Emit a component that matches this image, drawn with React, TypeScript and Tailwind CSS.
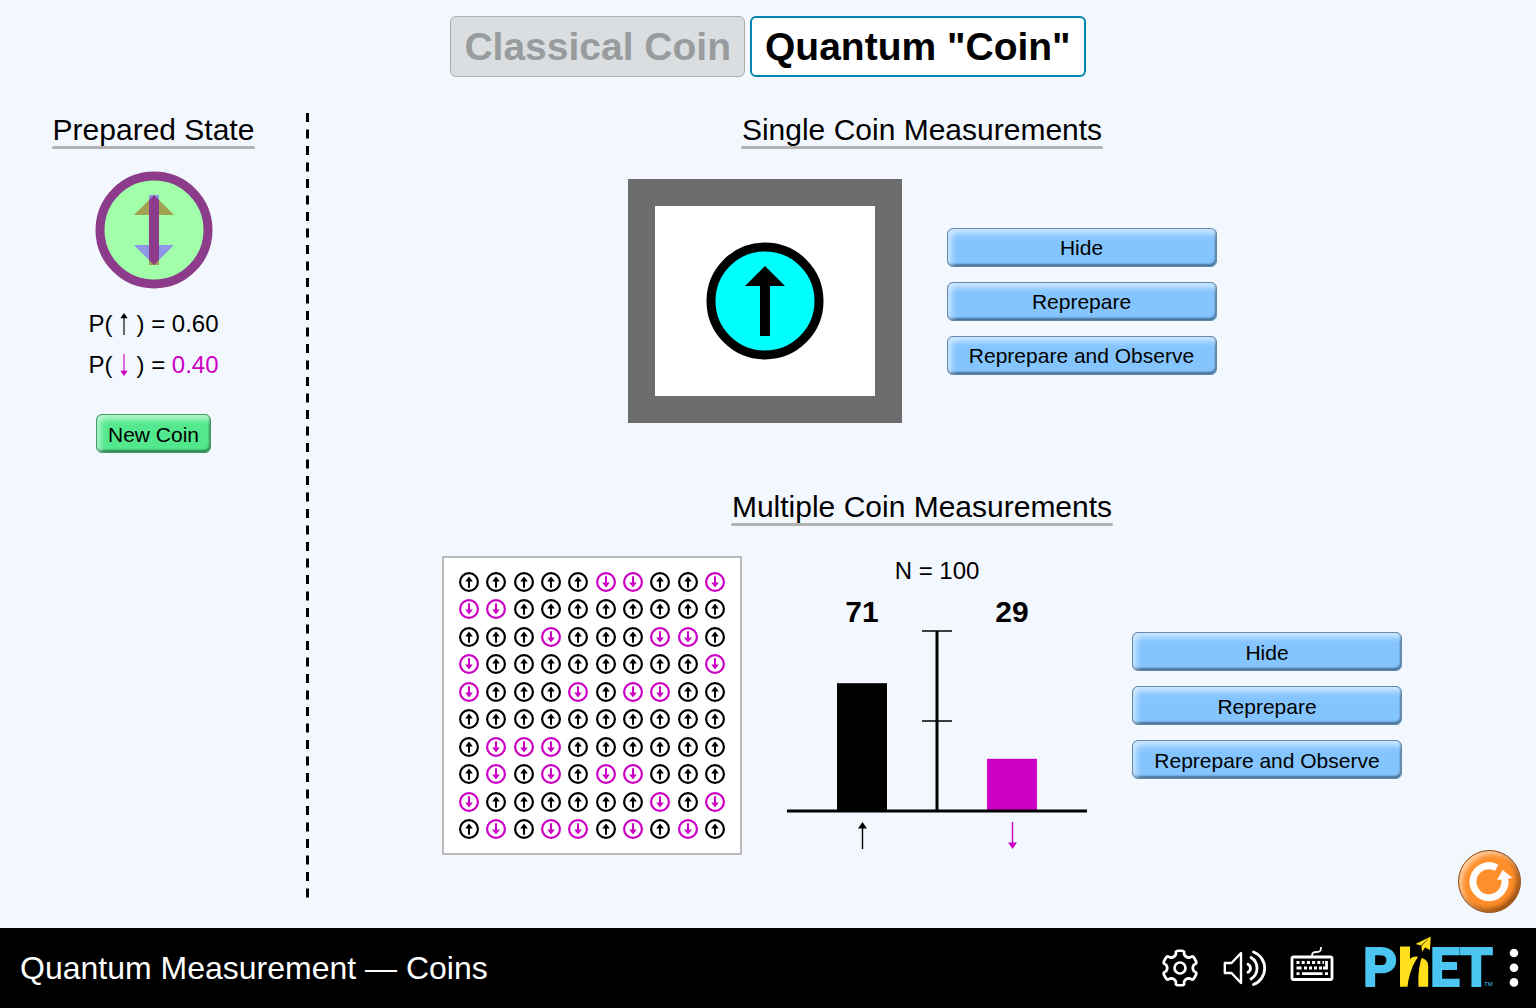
import React from "react";

const MAGENTA = "#cc00c4";

const COINS = [
  "uuuuudduud",
  "dduuuuuuuu",
  "uuuduuuddu",
  "duuuuuuuud",
  "duuududduu",
  "uuuuuuuuuu",
  "uddduuuuuu",
  "udududduuu",
  "duuuuuudud",
  "ududdududu",
];

const HEADS = COINS.join("").split("u").length - 1;
const TAILS = 100 - HEADS;

function polar(radius: number, degrees: number) {
  const a = (degrees * Math.PI) / 180;
  return `${(19 + radius * Math.cos(a)).toFixed(2)} ${(19 + radius * Math.sin(a)).toFixed(2)}`;
}

// Six-toothed gear outline centred in a 38 x 38 box.
const GEAR =
  [-90, -30, 30, 90, 150, 210]
    .map(
      (a, i) =>
        `${i === 0 ? "M" : "L"}${polar(14.2, a - 17)}L${polar(16.8, a - 14)}Q${polar(17.6, a - 11)} ${polar(17.4, a - 7)}` +
        `L${polar(17.4, a + 7)}Q${polar(17.6, a + 11)} ${polar(16.8, a + 14)}L${polar(14.2, a + 17)}Q${polar(11.6, a + 30)} ${polar(14.2, a + 43)}`
    )
    .join("") + "Z";

function Heading({ children }: { children: React.ReactNode }) {
  return (
    <h2 className="w-fit text-[30px] leading-[34px] whitespace-nowrap">
      {children}
      <span className="-mx-px -mt-px mb-px block h-[3px] rounded-full bg-[#b3b3b3]" />
    </h2>
  );
}

function PushButton({ label, tone = "blue" }: { label: string; tone?: "blue" | "green" }) {
  const look =
    tone === "blue"
      ? "w-[270px] border-[#6289ab] bg-[#85c5ff] shadow-[inset_3px_4px_6px_rgba(255,255,255,0.65),inset_-1px_-2px_2px_#3f6a92]"
      : "w-[115px] border-[#3f9a64] bg-[#53e88d] shadow-[inset_3px_4px_6px_rgba(255,255,255,0.65),inset_-1px_-2px_2px_#257d4a]";
  return (
    <button type="button" className={`h-[39px] rounded-[6px] border pt-0.5 text-[21px] leading-6 whitespace-nowrap ${look}`}>
      {label}
    </button>
  );
}

function ButtonColumn() {
  return (
    <div className="flex flex-col gap-[15px]">
      <PushButton label="Hide" />
      <PushButton label="Reprepare" />
      <PushButton label="Reprepare and Observe" />
    </div>
  );
}

function ThinArrow({ down = false, className }: { down?: boolean; className: string }) {
  return (
    <svg viewBox="0 0 9 27" className={className} aria-label={down ? "down" : "up"} role="img">
      <path
        d={down ? "M3.800 0h1.400v20.500H9L4.500 27 0 20.500h3.800z" : "M3.800 27h1.400V6.500H9L4.500 0 0 6.500h3.800z"}
        fill={down ? MAGENTA : "#000"}
      />
    </svg>
  );
}

function SmallCoin({ down }: { down: boolean }) {
  const color = down ? MAGENTA : "#000";
  return (
    <svg viewBox="0 0 20 20" className="size-5" role="img" aria-label={down ? "down" : "up"}>
      <circle cx="10" cy="10" r="8.900" fill="#fff" stroke={color} strokeWidth="2.200" />
      <path
        d={down ? "M9 4.300h2v6.200h2.800L10 15.500 6.200 10.500H9z" : "M9 15.700h2V9.500h2.800L10 4.500 6.200 9.500H9z"}
        fill={color}
      />
    </svg>
  );
}

function Probability({ down = false, value }: { down?: boolean; value: string }) {
  return (
    <p className="flex h-[41px] items-center text-[24px] whitespace-pre">
      <span>P(</span>
      <ThinArrow down={down} className="mx-2 h-[22px] w-[8px]" />
      <span>) = </span>
      <span className={down ? "text-[#cc00c4]" : ""}>{value}</span>
    </p>
  );
}

function Histogram() {
  return (
    <div className="flex w-[300px] flex-col pb-[6px]">
      <p className="text-center text-[24px] leading-[30px]">N = 100</p>
      <div className="mt-[9px] grid grid-cols-2 text-center text-[30px] leading-[34px] font-bold">
        <span>{HEADS}</span>
        <span>{TAILS}</span>
      </div>
      <svg viewBox="0 0 300 184" className="h-[184px] w-[300px]" role="img" aria-label="Histogram of measurements">
        <rect x="50" y={182 - HEADS * 1.8} width="50" height={HEADS * 1.8} fill="#000" />
        <rect x="200" y={182 - TAILS * 1.8} width="50" height={TAILS * 1.8} fill={MAGENTA} />
        <path d="M150 2v180" stroke="#000" strokeWidth="3" />
        <path d="M135 2h30M135 92h30" stroke="#000" strokeWidth="1.700" />
        <path d="M0 182h300" stroke="#000" strokeWidth="3" />
      </svg>
      <div className="mt-[9px] grid grid-cols-2 justify-items-center">
        <ThinArrow className="h-[27px] w-[9px]" />
        <ThinArrow down className="h-[27px] w-[9px]" />
      </div>
    </div>
  );
}

function PhetLogo() {
  return (
    <svg viewBox="-2 0 134 68" className="h-[68px] w-[134px]" role="img" aria-label="PhET">
      <g fontFamily="Roboto, sans-serif" fontWeight="700" fontSize="53" fill="#4bc5f2" stroke="#4bc5f2" strokeWidth="2">
        <text x="-1" y="52">P</text>
        <text x="66" y="52">E</text>
        <text x="96" y="52">T</text>
      </g>
      <text x="120" y="52" fontFamily="'Liberation Sans', sans-serif" fontSize="6" fill="#4bc5f2">TM</text>
      <g fill="#ffdf1c">
        <path d="M36 12.500h10v12.500c3-2.500 5.500-3 8-2C49 30 45 40 43.500 52.700H36z" />
        <path d="M54.500 52.700c-.5-11 .2-19 3-28.700 5 1.500 6.700 4 6.700 9v19.700z" />
        <path d="M66.700 2.500 51.500 10l5.500 1.500zM66.700 2.500 57.500 12l.5 6 3-4.500 5 2.500z" />
      </g>
    </svg>
  );
}

export default function App() {
  return (
    <div className="flex min-h-screen flex-col bg-[#f3f8ff] font-['Liberation_Sans',sans-serif] text-black">
      <nav className="flex justify-center gap-[5px] pt-4 text-[39px] leading-none font-bold">
        <button type="button" className="h-[61px] rounded-[6px] border border-[#aaaeaf] bg-[#dadee0] px-[13px] text-[#989c9e]">
          Classical Coin
        </button>
        <button type="button" className="h-[61px] rounded-[6px] border-2 border-[#0085b0] bg-white px-[13px]">
          Quantum "Coin"
        </button>
      </nav>

      <main className="flex flex-1 pt-9">
        <section className="flex w-[306px] flex-col items-center pl-px">
          <Heading>Prepared State</Heading>
          <svg viewBox="0 0 118 118" className="mt-[21px] size-[118px]" role="img" aria-label="Prepared coin">
            <circle cx="59" cy="59" r="54" fill="#a1ffa9" stroke="#8d3c8b" strokeWidth="9" />
            <path d="M39 44 59 24 79 44z" fill="#a1a050" />
            <path d="M39 74 59 94 79 74z" fill="#8e97e6" />
            <path d="M54 24h10v20H54z" fill="#8e97e6" />
            <path d="M54 74h10v20H54z" fill="#a1a050" />
            <path d="M54 29 59 24 64 29V89L59 94 54 89z" fill="#8d3c8b" />
          </svg>
          <div className="mt-[14px]">
            <Probability value="0.60" />
            <Probability down value="0.40" />
          </div>
          <div className="mt-[29px]">
            <PushButton label="New Coin" tone="green" />
          </div>
        </section>

        <svg className="h-[785px] w-[3px]" aria-hidden="true">
          <path d="M1.500 0v785" stroke="#000" strokeWidth="3" strokeDasharray="9 7.500" />
        </svg>

        <div className="flex flex-1 flex-col pr-px">
          <section className="flex flex-col items-center">
            <Heading>Single Coin Measurements</Heading>
            <div className="mt-[29px] flex items-center gap-[45px]">
              <div className="flex h-[244px] w-[274px] items-center justify-center border-[27px] border-[#6d6d6d] bg-white">
                <svg viewBox="0 0 118 118" className="size-[118px]" role="img" aria-label="Coin showing up">
                  <circle cx="59" cy="59" r="54" fill="#0ff" stroke="#000" strokeWidth="9" />
                  <path d="M54 94h10V44h15L59 24 39 44h15z" />
                </svg>
              </div>
              <ButtonColumn />
            </div>
          </section>

          <section className="mt-[67px] flex flex-col items-center">
            <Heading>Multiple Coin Measurements</Heading>
            <div className="mt-[29px] flex items-center gap-[45px]">
              <div className="flex h-[299px] w-[300px] flex-col justify-between border-2 border-[#bbbbbb] bg-white px-[15px] py-[14px]">
                {COINS.map((row, r) => (
                  <div key={r} className="flex justify-between">
                    {row.split("").map((c, i) => (
                      <SmallCoin key={i} down={c === "d"} />
                    ))}
                  </div>
                ))}
              </div>
              <Histogram />
              <ButtonColumn />
            </div>
          </section>

          <button
            type="button"
            aria-label="Reset all"
            className="-mt-[5px] mr-[14px] mb-[15px] size-[63px] self-end rounded-full border border-[#8a4f1c] bg-[#ff8f2b] shadow-[inset_3px_3px_5px_rgba(255,255,255,0.6),inset_-3px_-3px_5px_#9a5012]"
          >
            <svg viewBox="1 1 61 61" className="size-[61px]" aria-hidden="true">
              <path d="M38.700 17.700A16 16 0 1 0 46.200 26.800" fill="none" stroke="#fff" strokeWidth="7" />
              <path d="M44.700 20 54.500 28 39 30z" fill="#fff" />
            </svg>
          </button>
        </div>
      </main>

      <footer className="flex h-20 items-center justify-between bg-black pr-[17px] pl-5 text-white">
        <h1 className="text-[32px] leading-none whitespace-nowrap">Quantum Measurement — Coins</h1>
        <div className="flex items-center">
          <button type="button" aria-label="Preferences" className="mr-6">
            <svg viewBox="0 0 38 38" className="size-[38px]" fill="none" stroke="#fff" strokeWidth="2.700" strokeLinejoin="round">
              <circle cx="19" cy="19" r="5.500" />
              <path d={GEAR} />
            </svg>
          </button>
          <button type="button" aria-label="Sound" className="mr-[23px]">
            <svg viewBox="0 0 44 38" className="h-[38px] w-[44px]" fill="none" stroke="#fff" strokeWidth="2.400" strokeLinejoin="round">
              <path d="M1.800 14h6.700L18 4v30L8.500 24H1.800z" />
              <path
                d="M25 15.300a4.500 4.500 0 0 1 0 8M28 8.500a12.600 12.600 0 0 1 0 21.500M30.500 3a17.400 17.400 0 0 1 0 32.500"
                strokeWidth="2.800"
                strokeLinecap="round"
              />
            </svg>
          </button>
          <button type="button" aria-label="Keyboard shortcuts" className="mr-7">
            <svg viewBox="0 3 44 38" className="h-[38px] w-[44px] overflow-visible" fill="none" stroke="#fff">
              <rect x="2" y="11" width="40" height="22.500" rx="1.500" strokeWidth="2.800" />
              <path d="M22 10c0-4 2-4 5-4s4-1 4-5" strokeWidth="1.800" />
              <path d="M6.500 16.500H34" strokeWidth="2.800" strokeDasharray="3 2.200" />
              <path d="M6.500 22h5M14 22h3M19 22h3M24 22h3M29 22h3" strokeWidth="2.800" />
              <path d="M36.500 15v7h-3.500M6.500 27.700h3M12 27.700h20.500M35 27.700h3" strokeWidth="2.800" />
            </svg>
          </button>
          <a href="#" aria-label="PhET home">
            <PhetLogo />
          </a>
          <button type="button" aria-label="Menu" className="ml-[13px]">
            <svg viewBox="0 0 10 40" className="h-[40px] w-[10px]" fill="#fff">
              <circle cx="5" cy="5" r="4.300" />
              <circle cx="5" cy="19.700" r="4.300" />
              <circle cx="5" cy="34.400" r="4.300" />
            </svg>
          </button>
        </div>
      </footer>
    </div>
  );
}
